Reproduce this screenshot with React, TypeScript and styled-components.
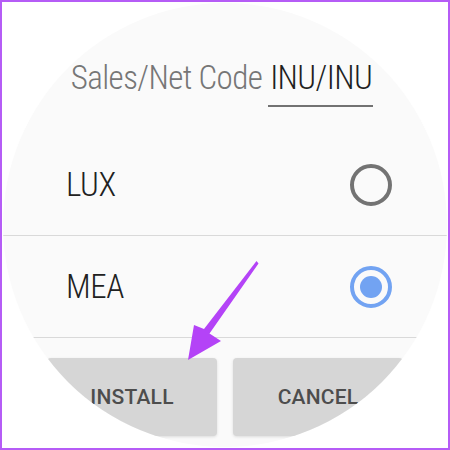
import React, { useState } from "react";
import styled, { createGlobalStyle } from "styled-components";

const GlobalStyle = createGlobalStyle`
  html, body {
    margin: 0;
    padding: 0;
    background: #ffffff;
    font-family: Roboto, "Noto Sans", sans-serif;
  }
`;

const regions = ["LUX", "MEA"];

const App: React.FC = () => {
  const [selected, setSelected] = useState("MEA");

  return (
    <>
      <GlobalStyle />
      <Frame>
        <Watch>
          <CodeRow>
            <CodeLabel>Sales/Net Code</CodeLabel>
            <CodeValue>INU/INU</CodeValue>
          </CodeRow>
          <List>
            {regions.map((r) => (
              <Row key={r} onClick={() => setSelected(r)}>
                <RowLabel>{r}</RowLabel>
                <Radio $checked={selected === r} />
              </Row>
            ))}
          </List>
          <Buttons>
            <Button>INSTALL</Button>
            <Button>CANCEL</Button>
          </Buttons>
        </Watch>
        <Arrow viewBox="0 0 450 450">
          <polygon
            points="256.5,261 258.5,263.5 209.5,333.5 221,341 188,360 194,325 204,329"
            fill="#b443f7"
          />
        </Arrow>
      </Frame>
    </>
  );
};

export default App;

const Frame = styled.div`
  position: relative;
  width: 450px;
  height: 450px;
  box-sizing: border-box;
  border: 2px solid #b55cf6;
  padding: 1px;
  background: #ffffff;
  overflow: hidden;
`;

const Watch = styled.div`
  width: 444px;
  height: 444px;
  border-radius: 50%;
  overflow: hidden;
  background: #fafafa;
  display: flex;
  flex-direction: column;
`;

const CodeRow = styled.div`
  display: flex;
  justify-content: center;
  align-items: flex-start;
  gap: 6px;
  padding-top: 55px;
  padding-right: 6px;
  height: 76px;
  font-weight: 300;
  font-stretch: 75%;
  font-size: 33px;
  line-height: 40px;
  letter-spacing: -0.6px;
`;

const CodeLabel = styled.span`
  color: #767676;
`;

const CodeValue = styled.span`
  display: inline-block;
  color: #1f1f1f;
  padding: 0 1px 7px 2px;
  border-bottom: 2px solid #727272;
`;

const List = styled.div`
  display: flex;
  flex-direction: column;
`;

const Row = styled.div`
  display: flex;
  align-items: center;
  justify-content: space-between;
  height: 101px;
  padding: 0 55px 0 63px;
  border-bottom: 1px solid #d9d9d9;
  cursor: pointer;
`;

const RowLabel = styled.span`
  font-weight: 300;
  font-stretch: 75%;
  font-size: 33px;
  letter-spacing: -0.4px;
  color: #212121;
`;

const Radio = styled.span<{ $checked: boolean }>`
  position: relative;
  width: 42px;
  height: 42px;
  box-sizing: border-box;
  border-radius: 50%;
  border: 4px solid ${(p) => (p.$checked ? "#72a3f2" : "#737373")};

  &::after {
    content: "";
    position: absolute;
    left: 6px;
    top: 6px;
    width: 22px;
    height: 22px;
    border-radius: 50%;
    background: #72a3f2;
    display: ${(p) => (p.$checked ? "block" : "none")};
  }
`;

const Buttons = styled.div`
  display: flex;
  justify-content: center;
  gap: 16px;
  padding-top: 20px;
`;

const Button = styled.button`
  width: 170px;
  height: 78px;
  border: none;
  border-radius: 4px;
  background: #d6d6d6;
  box-shadow: 0 1px 3px rgba(0, 0, 0, 0.12);
  color: #4d4d4d;
  font-family: Roboto, "Noto Sans", sans-serif;
  font-weight: 500;
  font-size: 21px;
  letter-spacing: 0.2px;
  padding: 0;
`;

const Arrow = styled.svg`
  position: absolute;
  left: -2px;
  top: -2px;
  width: 450px;
  height: 450px;
  pointer-events: none;
`;
